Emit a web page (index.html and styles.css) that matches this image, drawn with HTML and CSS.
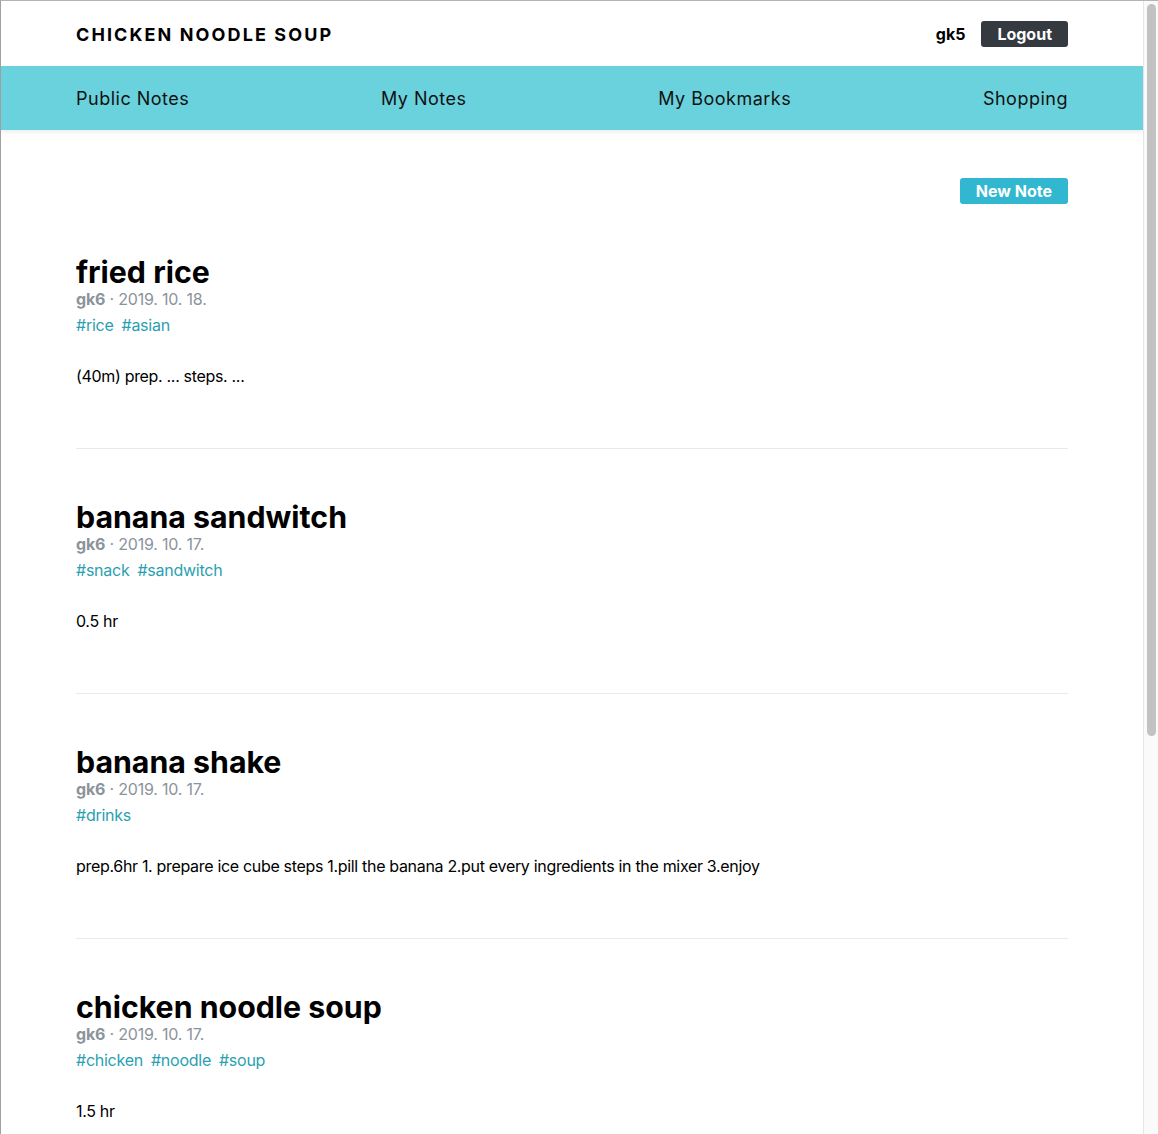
FILE: index.html
```html
<!DOCTYPE html>
<html lang="en">
<head>
<meta charset="utf-8">
<title>Chicken Noodle Soup</title>
<link rel="stylesheet" href="styles.css">
</head>
<body>
<div class="window">
  <div class="page">
    <header class="topbar">
      <div class="container topbar-inner">
        <a class="brand" href="#">CHICKEN NOODLE SOUP</a>
        <div class="user">
          <span class="username">gk5</span>
          <button class="btn btn-dark">Logout</button>
        </div>
      </div>
    </header>
    <nav class="navbar">
      <div class="container nav-inner">
        <a href="#">Public Notes</a>
        <a href="#">My Notes</a>
        <a href="#">My Bookmarks</a>
        <a href="#">Shopping</a>
      </div>
    </nav>
    <main class="container main">
      <div class="actions">
        <button class="btn btn-info">New Note</button>
      </div>
      <article class="note">
        <h2 class="note-title">fried rice</h2>
        <div class="meta"><b>gk6</b> · 2019. 10. 18.</div>
        <div class="tags"><a href="#">#rice</a><a href="#">#asian</a></div>
        <p class="body">(40m) prep. ... steps. ...</p>
      </article>
      <article class="note">
        <h2 class="note-title">banana sandwitch</h2>
        <div class="meta"><b>gk6</b> · 2019. 10. 17.</div>
        <div class="tags"><a href="#">#snack</a><a href="#">#sandwitch</a></div>
        <p class="body">0.5 hr</p>
      </article>
      <article class="note">
        <h2 class="note-title">banana shake</h2>
        <div class="meta"><b>gk6</b> · 2019. 10. 17.</div>
        <div class="tags"><a href="#">#drinks</a></div>
        <p class="body">prep.6hr 1. prepare ice cube steps 1.pill the banana 2.put every ingredients in the mixer 3.enjoy</p>
      </article>
      <article class="note">
        <h2 class="note-title">chicken noodle soup</h2>
        <div class="meta"><b>gk6</b> · 2019. 10. 17.</div>
        <div class="tags"><a href="#">#chicken</a><a href="#">#noodle</a><a href="#">#soup</a></div>
        <p class="body">1.5 hr</p>
      </article>
    </main>
  </div>
  <div class="scrollbar"><div class="thumb"></div></div>
</div>
</body>
</html>
```
FILE: styles.css
```css
* { box-sizing: border-box; }
html, body { margin: 0; padding: 0; }
body {
  font-family: Inter, "Noto Sans", "Liberation Sans", sans-serif;
  color: #000;
  background: #fff;
}
a { text-decoration: none; color: inherit; }

.window {
  display: flex;
  height: 1134px;
  overflow: hidden;
  border-top: 1px solid #b4b4b4;
  border-left: 1px solid #a0a0a0;
}
.page {
  flex: 1;
  overflow: hidden;
  min-width: 0;
}
.scrollbar {
  width: 15px;
  flex: none;
  background: #fafafa;
  border-left: 1px solid #e6e6e6;
  padding: 3px 2px 0 3px;
}
.thumb {
  height: 732px;
  background: #c2c2c2;
  border-radius: 5px;
}

.container {
  width: 992px;
  margin: 0 auto;
}

.topbar { height: 65px; background: #fff; }
.topbar-inner {
  height: 100%;
  display: flex;
  align-items: center;
  justify-content: space-between;
}
.brand {
  font-size: 18px;
  font-weight: 700;
  letter-spacing: 2.1px;
  color: #000;
  padding-top: 2px;
}
.user { display: flex; align-items: center; gap: 16px; }
.username { font-weight: 700; font-size: 16px; }

.btn {
  font-family: inherit;
  font-size: 16px;
  font-weight: 700;
  color: #fff;
  border: none;
  border-radius: 3px;
  height: 26px;
  padding: 0 16px;
  line-height: 26px;
}
.btn-dark { background: #343a40; }
.btn-info { background: #31b7cf; }

.navbar {
  height: 64px;
  background: #6ad2dd;
  box-shadow: 0 2px 5px rgba(0,0,0,0.08);
  position: relative;
}
.nav-inner {
  height: 100%;
  display: flex;
  align-items: center;
  justify-content: space-between;
  font-size: 18px;
  letter-spacing: 0.5px;
  color: #111;
}

.main { padding-top: 48px; }
.actions { display: flex; justify-content: flex-end; }

.note {
  padding: 51px 0 62px;
  border-bottom: 1px solid #e9e9e9;
}
.note-title {
  margin: 0;
  font-size: 30.3px;
  font-weight: 700;
  line-height: 34px;
}
.meta {
  font-size: 16px;
  line-height: 20px;
  color: #8b939b;
  letter-spacing: -0.2px;
}
.meta b { font-weight: 700; }
.tags {
  margin-top: 6px;
  display: flex;
  gap: 8px;
  font-size: 16px;
  line-height: 20px;
  letter-spacing: -0.25px;
}
.tags a { color: #2a9fb1; }
.body {
  margin: 31px 0 0;
  font-size: 16px;
  line-height: 20px;
  letter-spacing: -0.32px;
}
```
